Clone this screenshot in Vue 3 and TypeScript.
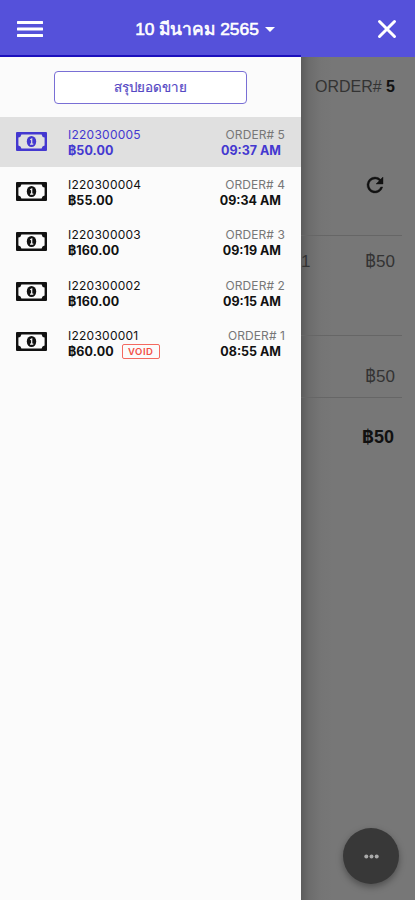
<script setup lang="ts">
interface Receipt {
  id: string
  total: string
  order: number
  time: string
  voided?: boolean
}

const receipts: Receipt[] = [
  { id: 'I220300005', total: '฿50.00', order: 5, time: '09:37 AM' },
  { id: 'I220300004', total: '฿55.00', order: 4, time: '09:34 AM' },
  { id: 'I220300003', total: '฿160.00', order: 3, time: '09:19 AM' },
  { id: 'I220300002', total: '฿160.00', order: 2, time: '09:15 AM' },
  { id: 'I220300001', total: '฿60.00', order: 1, time: '08:55 AM', voided: true },
]
const selected = 'I220300005'
</script>

<template>
  <div class="screen">
    <header class="bar">
      <button class="plain menu" aria-label="Menu">
        <svg width="26" height="18" viewBox="0 0 26 18"><path d="M1 2.5h24M1 9h24M1 15.5h24" stroke="#fff" stroke-width="3.1" stroke-linecap="round" /></svg>
      </button>
      <button class="plain date">
        <span class="date-text">10 มีนาคม 2565</span>
        <svg width="10" height="5" viewBox="0 0 10 5"><path d="M0 0h10L5 5z" fill="#fff" /></svg>
      </button>
      <button class="plain close" aria-label="Close">
        <svg width="20" height="20" viewBox="0 0 20 20"><path d="M2.500 2.500l15 15M17.500 2.500l-15 15" stroke="#fff" stroke-width="3" stroke-linecap="round" /></svg>
      </button>
    </header>
    <div class="content">
      <aside class="drawer">
        <button class="summary"><span>สรุปยอดขาย</span></button>
        <ul class="list">
          <li v-for="r in receipts" :key="r.id" class="row" :class="{ active: r.id === selected }">
            <svg class="cash" width="31" height="19" viewBox="0 0 31 19">
              <path fill="currentColor" fill-rule="evenodd" d="M1 0h29a1 1 0 0 1 1 1v17a1 1 0 0 1-1 1H1a1 1 0 0 1-1-1V1a1 1 0 0 1 1-1zM5.400 2.400A3.500 3.500 0 0 1 2.400 5.400v8.200a3.500 3.500 0 0 1 3 3h20.200a3.500 3.500 0 0 1 3-3V5.400a3.500 3.500 0 0 1-3-3z" />
              <ellipse cx="15.500" cy="9.500" rx="4.700" ry="5.500" fill="currentColor" />
              <path class="cash-mark" d="M14.200 7.800l1.500-.8v4.900M14 12.100h3.300" fill="none" stroke-width="1.200" />
            </svg>
            <div class="info">
              <span class="id">{{ r.id }}</span>
              <div class="amount">
                <b>{{ r.total }}</b>
                <span v-if="r.voided" class="void">VOID</span>
              </div>
            </div>
            <div class="when">
              <span class="order">ORDER# {{ r.order }}</span>
              <b class="time">{{ r.time }}</b>
            </div>
          </li>
        </ul>
      </aside>
      <main class="detail">
        <div class="heading">ORDER# <b>5</b></div>
        <div class="tools">
          <svg width="24" height="24" viewBox="0 0 24 24"><path fill="#111" stroke="#111" stroke-width=".4" d="M17.650 6.350A7.958 7.958 0 0 0 12 4a8 8 0 1 0 7.730 10h-2.080A6 6 0 1 1 12 6c1.660 0 3.140.690 4.220 1.780L13 11h7V4z" /></svg>
        </div>
        <div class="line item"><span class="qty">1</span><span>฿50</span></div>
        <div class="line subtotal"><span>฿50</span></div>
        <div class="line total"><b>฿50</b></div>
        <button class="fab" aria-label="More">
          <svg width="15" height="5" viewBox="0 0 15 5"><g fill="#aaa"><circle cx="2.300" cy="2.500" r="2" /><circle cx="7.500" cy="2.500" r="2" /><circle cx="12.700" cy="2.500" r="2" /></g></svg>
        </button>
      </main>
    </div>
  </div>
</template>

<style>
body { margin: 0; }
</style>

<style scoped>
.screen {
  width: 415px;
  height: 900px;
  display: flex;
  flex-direction: column;
  overflow: hidden;
  font-family: Inter, "Liberation Sans", "Noto Sans", sans-serif;
  color: #111;
}
button { font-family: inherit; box-sizing: border-box; }
svg { display: block; flex: none; }
.plain { border: 0; padding: 0; background: none; display: flex; align-items: center; }
.bar {
  height: 57px;
  flex: none;
  box-sizing: border-box;
  padding: 1px 18px 0 17px;
  display: grid;
  grid-template-columns: 60px 1fr 60px;
  align-items: center;
  background: linear-gradient(#1c10bd, #1c10bd) 0 100% / 301px 2px no-repeat #5551da;
}
.date { justify-content: center; gap: 6px; padding-right: 4px; }
.date-text { font: 500 17.400px/28px "Liberation Sans", "Noto Sans", sans-serif; color: #fff; white-space: nowrap; -webkit-text-stroke: 0.600px #fff; }
.close { justify-self: end; }
.content { flex: 1; display: flex; min-height: 0; }
.drawer { width: 301px; flex: none; background: #fbfbfb; }
.summary {
  display: flex;
  align-items: center;
  justify-content: center;
  width: 193px;
  height: 33px;
  margin: 14px 0 13px 54px;
  padding: 0 0 2px;
  background: #fff;
  border: 1px solid #796fd5;
  border-radius: 4px;
  color: #5548c4;
  font-size: 13.400px;
  line-height: 20px;
  -webkit-text-stroke: 0.200px #5548c4;
}
.list { list-style: none; margin: 0; padding: 0; }
.row {
  height: 50.200px;
  box-sizing: border-box;
  display: flex;
  align-items: flex-start;
  padding: 10px 16px 0;
  color: #111;
}
.row.active { background: #e0e0e0; color: #4438d0; }
.cash { margin-top: 4.500px; }
.cash-mark { stroke: #fbfbfb; }
.active .cash-mark { stroke: #e0e0e0; }
.info { margin-left: 21px; flex: 1; }
.id { display: block; font-size: 12px; line-height: 16px; letter-spacing: 0.250px; }
.amount { display: flex; align-items: center; height: 16px; font-size: 12.500px; line-height: 16px; }
.amount b { font-weight: 700; letter-spacing: 0.100px; }
.void {
  margin-left: 8px;
  width: 38px;
  height: 15px;
  box-sizing: border-box;
  border: 1px solid #f4695f;
  border-radius: 2px;
  color: #f34d43;
  font-size: 9.500px;
  font-weight: 600;
  line-height: 13px;
  letter-spacing: 0.500px;
  text-align: center;
}
.when { display: flex; flex-direction: column; align-items: flex-end; }
.order { color: #777; font-size: 12px; line-height: 16px; letter-spacing: 0.080px; }
.time { font-size: 12.500px; line-height: 16px; font-weight: 650; margin-right: 4px; }
.detail {
  position: relative;
  flex: 1;
  background: linear-gradient(90deg, #5c5c5c, #6c6c6c 8px, #757575 20px, #777 32px);
  font-family: "Liberation Sans", Inter, sans-serif;
  color: #333;
  font-size: 17px;
}
.heading { padding: 20px 20px 0 0; text-align: right; font-size: 16px; line-height: 20px; white-space: nowrap; }
.heading b { color: #111; }
.tools { height: 138px; padding-top: 76px; display: flex; justify-content: flex-end; align-items: flex-start; margin-right: 28px; box-sizing: border-box; }
.line { display: flex; justify-content: flex-end; margin-right: 13px; padding-right: 7px; box-sizing: border-box; border-top: 1px solid #666; line-height: 20px; }
.item { height: 100px; padding-top: 16px; }
.qty { margin-right: auto; }
.subtotal { height: 62px; padding-top: 31px; }
.total { padding-top: 29px; padding-right: 8px; color: #111; font-size: 18px; }
.fab {
  position: absolute;
  right: 16px;
  bottom: 16px;
  width: 56px;
  height: 56px;
  padding: 0;
  border: 0;
  border-radius: 50%;
  background: #383838;
  display: flex;
  align-items: center;
  justify-content: center;
  box-shadow: 0 3px 7px rgba(0, 0, 0, 0.35);
}
</style>
